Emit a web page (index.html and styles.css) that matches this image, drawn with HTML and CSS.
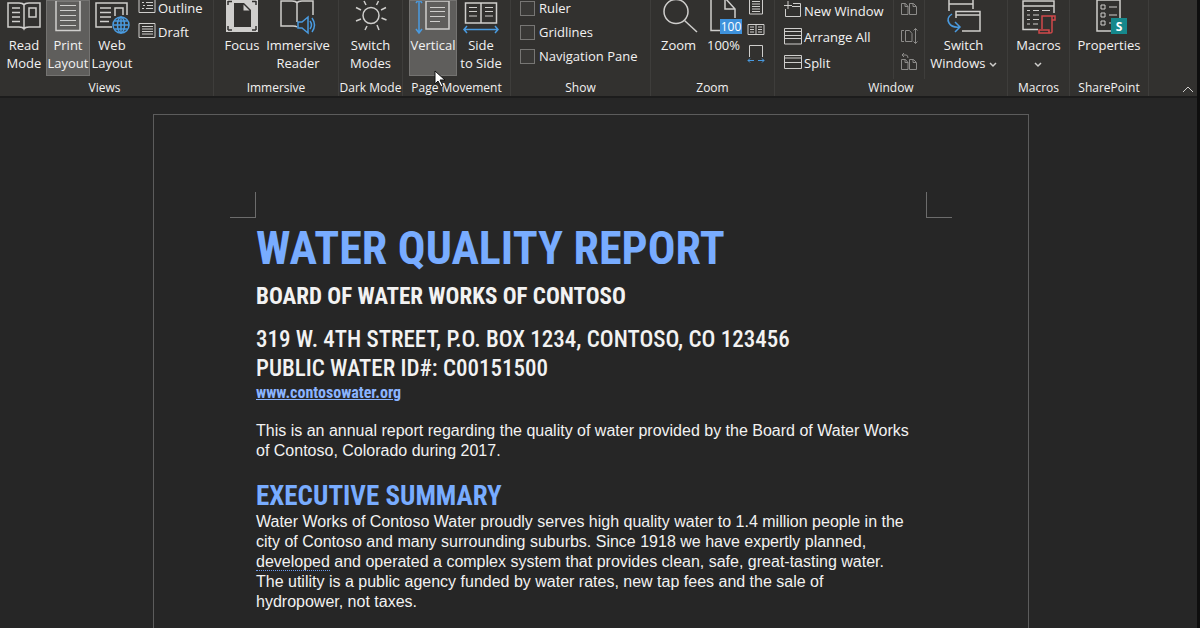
FILE: index.html
```html
<!DOCTYPE html>
<html lang="en">
<head>
<meta charset="utf-8">
<title>Water Quality Report</title>
<link rel="stylesheet" href="styles.css">
</head>
<body>
<div class="app">
<header class="ribbon">
  <section class="group views">
    <div class="tools">
      <button class="big" type="button"><svg class="ic" width="36" height="36" viewBox="0 0 36 36"><path d="M2 3h11q4 0 5 2q1-2 5-2h11v24H23q-4 0-5 2q-1-2-5-2H2zM18 5v24M6 8h8M6 12.500h8M6 17h8M6 21.500h8M23 8h7v9h-7z"/></svg><span>Read<br>Mode</span></button>
      <button class="big on" type="button"><svg class="ic" width="36" height="36" viewBox="0 0 36 36"><path d="M6 .5h24v30H6z"/><path class="thin" d="M10 5.500h16M10 10.500h16M10 15.500h16M10 20.500h16M10 25.500h16"/></svg><span>Print<br>Layout</span></button>
      <button class="big" type="button"><svg class="ic" width="36" height="36" viewBox="0 0 36 36"><path d="M18 27H2V3h31v12M6 8h11M6 12.500h11M6 17h11M6 21.500h9M21 16V8h8v7"/><g class="blue"><circle class="bg" cx="27" cy="25" r="8"/><ellipse cx="27" cy="25" rx="3.500" ry="8"/><path d="M19 25h16M20.500 21h13M20.500 29h13M27 17v16"/></g></svg><span>Web<br>Layout</span></button>
      <div class="list">
        <button class="row" type="button"><svg class="ic thin" width="18" height="18" viewBox="0 0 18 18"><path d="M1 .5h16v13H1zM4 3.500h2M8 3.500h7M5 6.500h2M9 6.500h6M4 9.500h2M8 9.500h7"/></svg>Outline</button>
        <button class="row" type="button"><svg class="ic thin" width="18" height="18" viewBox="0 0 18 18"><path d="M1 .5h16v14H1zM4 3.500h11M4 6h11M4 8.500h11M4 11h11"/></svg>Draft</button>
      </div>
    </div>
    <h2 class="caption">Views</h2>
  </section>
  <section class="group immersive">
    <div class="tools">
      <button class="big" type="button"><svg class="ic" width="36" height="36" viewBox="0 0 36 36"><path class="solid" d="M2-2h32v34H2z"/><path class="dark" d="M10 3h10l7 7v17H10z"/><path class="solid" d="M19.500 4.500v6h6z"/><path class="darkline" d="M4 1.500h4M4 1v4M32 1.500h-4M32 1v4M4 30h4M4 30v-4M32 30h-4M32 30v-4"/></svg><span>Focus</span></button>
      <button class="big" type="button"><svg class="ic" width="36" height="36" viewBox="0 0 36 36"><path d="M17 27q-1-1-4-1H1V1h11q4 0 5 2q1-2 5-2h11v14M17 3v19"/><path class="blue" d="M18 22h4l6-5v16l-6-5h-4zM30 21q3 4 0 8M32 18q5 7 0 14"/></svg><span>Immersive<br>Reader</span></button>
    </div>
    <h2 class="caption">Immersive</h2>
  </section>
  <section class="group darkmode">
    <div class="tools">
      <button class="big" type="button"><svg class="ic" width="36" height="36" viewBox="0 0 36 36"><circle cx="18" cy="15.500" r="8"/><path d="M23.500 5l2-4M28 10l5-2.500M28.500 18l5 2M24 25l2 5M14 26l-2 4M8 19l-5 2M8 10L3 7.500M13 5l-2-4"/></svg><span>Switch<br>Modes</span></button>
    </div>
    <h2 class="caption">Dark Mode</h2>
  </section>
  <section class="group movement">
    <div class="tools">
      <button class="big on" type="button"><svg class="ic" width="36" height="36" viewBox="0 0 36 36"><path d="M11 1h23v28H11z"/><path class="thin" d="M15 7.500h15M15 11.500h15M15 16.500h15M15 21.500h10"/><path class="blue" d="M4-1v34M1 3l3-4l3 4M1 29l3 4l3-4"/></svg><span>Vertical</span></button>
      <button class="big" type="button"><svg class="ic" width="36" height="36" viewBox="0 0 36 36"><path d="M2.500 3h31v20h-31zM18 3v20"/><path class="thin" d="M6 7.500h8M6 11.500h8M6 16h8M22 7.500h8M22 11.500h8M22 16h8"/><path class="blue" d="M1 29.500h34M4 26l-3 3.500L4 33M32 26l3 3.500L32 33"/></svg><span>Side<br>to Side</span></button>
    </div>
    <h2 class="caption">Page Movement</h2>
  </section>
  <section class="group show">
    <div class="tools">
      <div class="list">
        <label class="row"><input class="check" type="checkbox">Ruler</label>
        <label class="row"><input class="check" type="checkbox">Gridlines</label>
        <label class="row"><input class="check" type="checkbox">Navigation Pane</label>
      </div>
    </div>
    <h2 class="caption">Show</h2>
  </section>
  <section class="group zoom">
    <div class="tools">
      <button class="big" type="button"><svg class="ic" width="36" height="36" viewBox="0 0 36 36"><circle cx="15" cy="11.500" r="12"/><path d="M23.500 20.500L36 32"/></svg><span>Zoom</span></button>
      <button class="big" type="button"><svg class="ic" width="36" height="36" viewBox="0 0 36 36"><path d="M14 30.500H5V-2h14l10 11v9M19-2V9h10"/><path class="bluefill" d="M14 19h22v15H14z"/><text class="num" x="25" y="31">100</text></svg><span>100%</span></button>
      <div class="list">
        <button class="row" type="button" aria-label="One Page"><svg class="ic thin" width="18" height="18" viewBox="0 0 18 18"><path d="M2.500-1h13v16h-13zM5 2.500h8M5 5h8M5 7.500h8M5 10h8M5 12.500h8"/></svg></button>
        <button class="row" type="button" aria-label="Multiple Pages"><svg class="ic thin" width="18" height="18" viewBox="0 0 18 18"><path d="M1 1.500h16v10H1zM9 1.500v10M3 4h4M3 6.500h4M3 9h4M11 4h4M11 6.500h4M11 9h4"/></svg></button>
        <button class="row" type="button" aria-label="Page Width"><svg class="ic thin" width="18" height="18" viewBox="0 0 18 18"><path d="M2.500 10V-1.500h13V10"/><path class="blue" d="M1 13.500h6M11 13.500h6M3 11.500l-2 2l2 2M15 11.500l2 2l-2 2"/></svg></button>
      </div>
    </div>
    <h2 class="caption">Zoom</h2>
  </section>
  <section class="group window">
    <div class="tools">
      <div class="list wide">
        <button class="row" type="button"><svg class="ic" width="18" height="18" viewBox="0 0 18 18"><path class="thin" d="M1.500 7v7.500h15V1.500H9M8 4.500h8M4-1v8M0 3.500h8"/></svg>New Window</button>
        <button class="row" type="button"><svg class="ic" width="18" height="18" viewBox="0 0 18 18"><path class="thin" d="M.5 0.500h17v15.500H.5zM.5 3.500h17M.5 7.500h17M.5 10.500h17"/></svg>Arrange All</button>
        <button class="row" type="button"><svg class="ic" width="18" height="18" viewBox="0 0 18 18"><path class="thin" d="M.5 1.500h17v13H.5zM.5 4h17M.5 8.500h17"/></svg>Split</button>
      </div>
      <div class="list wide ruled">
        <button class="row dim" type="button" aria-label="View Side by Side"><svg class="ic" width="18" height="18" viewBox="0 0 18 18"><path d="M1.500 1.500h4l2.500 3v8H1.500zM9.500 1.500h4l3 3v8h-7zM5 1.500v3h3M13 1.500v3h3"/></svg></button>
        <button class="row dim" type="button" aria-label="Synchronous Scrolling"><svg class="ic" width="18" height="18" viewBox="0 0 18 18"><path d="M4 2.500H1.500v11H4M5.500 2.500h4l2.500 3v8H5.500zM15.500.5v15M13.500 2.500l2-2l2 2M13.500 13.500l2 2l2-2"/></svg></button>
        <button class="row dim" type="button" aria-label="Reset Window Position"><svg class="ic" width="18" height="18" viewBox="0 0 18 18"><path d="M1.500 5.500h4l2.500 3v7H1.500zM9.500 5.500h4l3 3v7h-7zM5 5.500v3h3M13 5.500v3h3M2 1h4q2 0 2 3M4-1L2 1l2 2"/></svg></button>
      </div>
      <button class="big" type="button"><svg class="ic" width="36" height="36" viewBox="0 0 36 36"><path d="M3 11V-1h24v10M3 4h24M10 18v-6.500h24V31H16M10 15h24"/><path class="blue" d="M6 14q-6 4-3 9q3 5 11 4M9 22l5 5l-5 5"/></svg><span>Switch<br>Windows <svg class="ic chev" width="8" height="6" viewBox="0 0 8 6"><path d="M1 1l3 3l3-3"/></svg></span></button>
    </div>
    <h2 class="caption">Window</h2>
  </section>
  <section class="group macros">
    <div class="tools">
      <button class="big" type="button"><svg class="ic" width="36" height="36" viewBox="0 0 36 36"><path d="M18 29.500H3V1h31v12M3 6h31"/><path class="thin" d="M7 10.500h3M13 10.500h6M22 10.500h8M7 15h3M13 15h6M7 19.500h3M13 19.500h6M7 24h3M13 24h5"/><path class="red" d="M22 29V16h13v4h-3v12q0 1-2 1H19v-3h10v3M32 16v4"/></svg><span>Macros<br><svg class="ic chev" width="8" height="6" viewBox="0 0 8 6"><path d="M1 1l3 3l3-3"/></svg></span></button>
    </div>
    <h2 class="caption">Macros</h2>
  </section>
  <section class="group sharepoint">
    <div class="tools">
      <button class="big" type="button"><svg class="ic" width="36" height="36" viewBox="0 0 36 36"><path d="M20 31H6V0h23v18"/><path class="thin" d="M10 5h4v4h-4zM10 13h4v4h-4zM10 21h4v4h-4zM18 7h8M18 15h8M18 23h2"/><path class="teal" d="M20 18h16v16H20z"/><text class="ess" x="28" y="30.500">S</text></svg><span>Properties</span></button>
    </div>
    <h2 class="caption">SharePoint</h2>
  </section>
  <button class="collapse" type="button" aria-label="Collapse the Ribbon"><svg class="ic thin" width="12" height="8" viewBox="0 0 12 8"><path d="M1 7l5-5l5 5"/></svg></button>
  <svg class="cursor" width="12" height="18" viewBox="0 0 12 18"><path d="M1 1v13l3-3l3 6l2-1l-3-6h5z"/></svg>
</header>
<main class="workspace">
  <article class="page">
    <div class="marks"><span class="mark left"></span><span class="mark right"></span></div>
    <div class="text">
      <h1 class="title">WATER QUALITY REPORT</h1>
      <p class="subtitle">BOARD OF WATER WORKS OF CONTOSO</p>
      <p class="address">319 W. 4TH STREET, P.O. BOX 1234, CONTOSO, CO 123456<br>PUBLIC WATER ID#: C00151500</p>
      <a class="site" href="#">www.contosowater.org</a>
      <p class="body">This is an annual report regarding the quality of water provided by the Board of Water Works<br>of Contoso, Colorado during 2017.</p>
      <h2 class="heading">EXECUTIVE SUMMARY</h2>
      <p class="body">Water Works of Contoso Water proudly serves high quality water to 1.4 million people in the<br>city of Contoso and many surrounding suburbs. Since 1918 we have expertly planned,<br><span class="flag">developed</span> and operated a complex system that provides clean, safe, great-tasting water.<br>The utility is a public agency funded by water rates, new tap fees and the sale of<br>hydropower, not taxes.</p>
    </div>
  </article>
</main>
</div>
</body>
</html>
```
FILE: styles.css
```css
* { box-sizing: border-box; }
body { margin: 0; background: #262626; color: #f2f2f2; font-family: "Open Sans", "Noto Sans", sans-serif; }
h1, h2, p { margin: 0; }
button { margin: 0; padding: 0; border: 0; background: none; color: inherit; font: inherit; }
.app { display: flex; flex-direction: column; height: 100vh; overflow: hidden; border-right: 3px solid #0e0e0e; }
.ribbon { position: relative; display: flex; flex: none; background: #32312f; border-bottom: 2px solid #1c1c1c; font-size: 13px; line-height: 18px; }
.group { display: flex; flex-direction: column; flex: none; border-right: 1px solid #3e3d3b; }
.tools { display: flex; justify-content: center; height: 79px; }
.caption { font-size: 12px; font-weight: 400; line-height: 17px; text-align: center; white-space: nowrap; }
.big { display: flex; flex-direction: column; align-items: center; height: 76px; white-space: nowrap; text-align: center; }
.on { background: #5f5e5c; outline: 1px solid #747371; outline-offset: -1px; }
.list { display: flex; flex-direction: column; margin-top: -4px; }
.row { display: flex; align-items: center; gap: 2px; height: 24px; white-space: nowrap; }
.wide { margin-top: -2px; }
.wide .row { height: 26px; }
.ruled { border: solid #3e3d3b; border-width: 0 1px; padding: 0 6px; }
.check { appearance: none; width: 15px; height: 15px; margin: 0 2px 0 0; border: 1px solid #777674; background: #393836; }

.views { width: 214px; }
.views .tools { justify-content: flex-start; padding-left: 2px; }
.views .big { width: 44px; }
.views .list { padding-left: 4px; }
.views .caption { padding-right: 4px; }
.immersive { width: 125px; }
.immersive .tools { gap: 2px; padding-left: 6px; }
.immersive .big + .big { width: 72px; }
.immersive .big { width: 36px; }
.darkmode { width: 64px; }
.movement { width: 108px; }
.movement .tools { padding-left: 1px; }
.movement .big { width: 48px; }
.show { width: 140px; }
.show .tools { justify-content: flex-start; padding-left: 9px; }
.zoom { width: 124px; }
.zoom .tools { justify-content: flex-start; padding-left: 6px; gap: 2px; }
.zoom .big { width: 43px; }
.window { width: 233px; }
.window .tools { justify-content: flex-start; padding-left: 9px; }
.window .list:first-child { width: 109px; }
.window .big { width: 77px; }
.macros { width: 62px; }
.sharepoint { width: 79px; }
.collapse { display: flex; flex: 1; align-items: flex-end; justify-content: flex-end; padding: 0 3px 3px 0; }

.ic { flex: none; overflow: visible; fill: none; stroke: #cfcecc; stroke-width: 1.5; }
.thin { stroke-width: 1; }
.ic .bg { fill: #32312f; }
.ic .blue, .blue { stroke: #4a9be0; }
.red { stroke: #d1484b; }
.solid { fill: #cfcecc; stroke: none; }
.dark { fill: #32312f; stroke: none; }
.darkline { stroke: #32312f; }
.bluefill { fill: #3f92dc; stroke: none; }
.teal { fill: #16888c; stroke: none; }
.dim .ic { stroke: #8d8c8a; stroke-width: 1; }
.chev { vertical-align: middle; }
.num, .ess { fill: #fff; stroke: none; text-anchor: middle; font-size: 12px; }
.ess { font-weight: 700; }
.cursor { position: absolute; left: 434px; top: 70px; fill: #fff; stroke: #111; stroke-width: 1; }

.workspace { display: flex; flex: 1; justify-content: center; padding: 16px 15px 0 0; min-height: 0; }
.page { width: 100%; max-width: 876px; border: 1px solid #5c5c5c; border-bottom: 0; padding: 77px 76px 0; }
.marks { display: flex; justify-content: space-between; }
.mark { width: 26px; height: 26px; border-bottom: 1px solid #6c6c6c; }
.left { border-right: 1px solid #6c6c6c; }
.right { border-left: 1px solid #6c6c6c; }
.text { padding: 2px 0 0 26px; white-space: nowrap; }
.title, .subtitle, .address, .site, .heading { font-family: "Liberation Sans Narrow", "Arial Narrow", "Roboto Condensed", "Liberation Sans", sans-serif; font-weight: 700; }
.title { color: #78acff; font-size: 46px; line-height: 56px; }
.subtitle { margin-top: 7px; font-size: 23px; line-height: 28px; }
.address { margin-top: 14px; font-size: 23px; line-height: 29px; font-weight: 500; }
.site { display: block; color: #8ab4ff; font-size: 16px; line-height: 20px; }
.body { font-family: "Liberation Sans", sans-serif; font-size: 16px; line-height: 20px; }
.site + .body { margin-top: 18px; }
.heading { margin-top: 20px; color: #78acff; font-size: 27px; line-height: 31px; }
.flag { border-bottom: 1px dotted #6f9df0; }
```
